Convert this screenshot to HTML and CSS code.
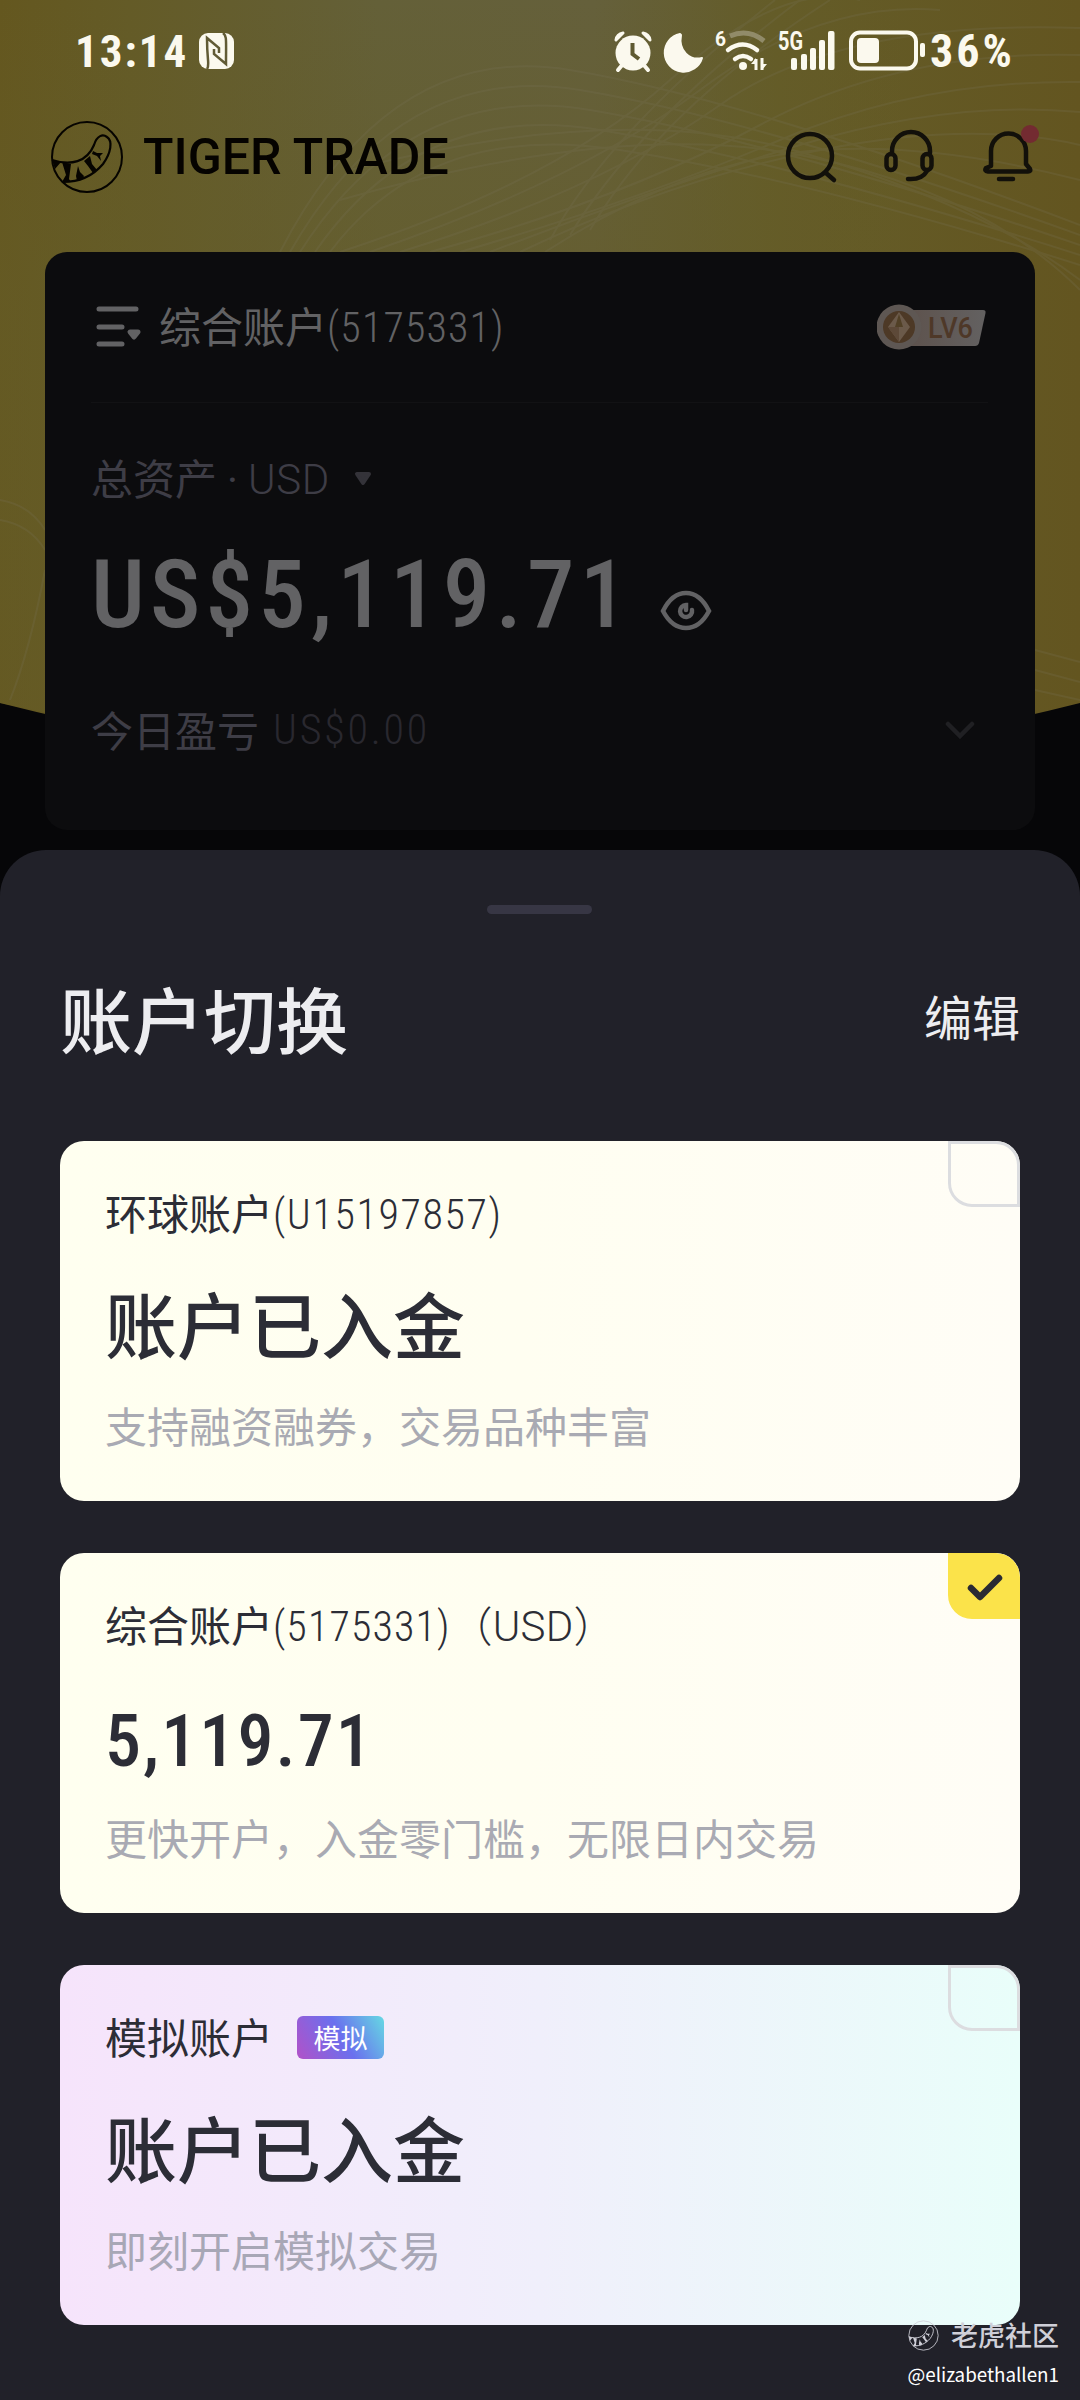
FILE: index.html
```html
<!DOCTYPE html>
<html lang="zh-CN">
<head>
<meta charset="utf-8">
<title>Tiger Trade</title>
<link rel="stylesheet" href="styles.css">
</head>
<body>
<svg class="defs" aria-hidden="true">
  <symbol id="tiger" viewBox="0 0 72 74">
    <circle cx="36" cy="37" r="35" fill="none" stroke="currentColor" stroke-width="2"/>
    <path d="M1 40C20 46 36 42 43 25C46 15 52 14 56 17C62 21 60 33 52 44C41 57 28 62 12 62" fill="none" stroke="currentColor" stroke-width="2.200"/>
    <path d="M1 40L10 42L4 49ZM11 42L20 44L18 59L20 62L11 62L15 55ZM27 46L29 52L33 56L31 60L26 61L25 56ZM33 41L39 36L41 44L46 50L42 53L37 46ZM42 31L46 33L52 33L49 36L50 41L46 36L41 34Z" fill="currentColor"/>
  </symbol>
</svg>
<main class="screen">
  <section class="home">
    <svg class="waves" viewBox="0 0 1080 720" preserveAspectRatio="none" aria-hidden="true">
      <defs>
        <linearGradient id="gold" x1="0" y1="0" x2="1" y2="0">
          <stop offset="0" stop-color="#64571f"/><stop offset=".12" stop-color="#645b27"/><stop offset=".35" stop-color="#646038"/><stop offset=".55" stop-color="#65603b"/><stop offset=".72" stop-color="#645c28"/><stop offset="1" stop-color="#635520"/>
        </linearGradient>
        <linearGradient id="goldLow" x1="0" y1="0" x2="0" y2="1">
          <stop offset="0" stop-color="#655c27" stop-opacity="0"/><stop offset=".4" stop-color="#655c27" stop-opacity=".9"/><stop offset="1" stop-color="#665e2a" stop-opacity="0.6"/>
        </linearGradient>
      </defs>
      <path d="M0 0H1080V703Q540 840 0 703Z" fill="url(#gold)"/>
      <path d="M0 0H900V720Q450 800 0 703Z" fill="url(#goldLow)" opacity=".6"/>
      <g fill="none" stroke="#787256" stroke-width="2" opacity=".24">
        <path d="M280 252Q390 40 570 70T1080 225"/><path d="M290 252Q400 60 580 90T1080 235"/><path d="M300 252Q410 80 590 110T1080 245"/><path d="M315 252Q420 100 600 130T1080 255"/><path d="M330 252Q430 120 620 150T1080 265"/>
        <path d="M340 252Q560 180 670 80T860 0"/><path d="M370 252Q580 180 700 90T940 10"/><path d="M400 252Q600 190 720 105T1080 28"/><path d="M430 252Q620 200 760 125T1080 55"/><path d="M460 252Q640 200 780 140T1080 82"/><path d="M490 252Q650 190 800 145T1080 112"/><path d="M520 252Q670 180 820 150T1080 145"/><path d="M545 252Q680 165 800 152T1080 180"/>
        <path d="M550 240Q610 130 775 0"/><path d="M570 235Q640 120 800 0"/><path d="M590 230Q660 110 830 0"/><path d="M350 170Q620 100 800 152T1080 280"/><path d="M340 200Q620 120 800 155T1080 290"/><path d="M0 500Q30 505 45 530"/><path d="M0 520Q30 525 45 550"/><path d="M10 700Q30 650 45 570"/><path d="M1035 650L1080 662"/><path d="M1035 670L1080 682"/><path d="M1035 690L1080 700"/>
      </g>
    </svg>

    <header class="status">
      <span class="clock">13:14</span>
      <svg class="nfc" viewBox="0 0 35 36"><rect width="35" height="36" rx="9" fill="#fbf9ee"/><path d="M8 36C11 32 8 29 8 5L20 15V20M24 0C28 3 27 6 27 31L15 21V16" fill="none" stroke="#615b35" stroke-width="2.5"/></svg>
      <svg class="icons" viewBox="0 0 324 42">
        <g fill="#fbf9ee" stroke="none">
          <circle cx="19" cy="23" r="17.5"/><path d="M2 10Q3 4 9 3ZM29 3Q35 4 36 10Z" stroke="#fbf9ee" stroke-width="3" stroke-linejoin="round"/><path d="M9 34L4 40M29 34L34 40" stroke="#fbf9ee" stroke-width="4" stroke-linecap="round"/><path d="M18.500 13V24L25 29" fill="none" stroke="#5f5a31" stroke-width="4"/>
          <path d="M66 4A19 19 0 1 0 88 28C76 31 64 21 67 5Z" stroke="#fbf9ee" stroke-width="2" stroke-linejoin="round"/>
          <path d="M116 6Q134 -2 150 11" fill="none" stroke="#918b69" stroke-width="5"/><path d="M114 20Q129 9 143 20M121 29Q129 23 137 29" fill="none" stroke="#fbf9ee" stroke-width="4.500" stroke-linecap="round"/><circle cx="129" cy="36" r="4"/><path d="M137 34L142 28V34ZM153 34L148 40V34Z"/><path d="M142 29V40M148 28V40" stroke="#fbf9ee" stroke-width="3"/>
          <rect x="177" y="28" width="6" height="12" rx="2"/><rect x="187" y="24" width="6" height="16" rx="2"/><rect x="196" y="18" width="6" height="22" rx="2"/><rect x="205" y="10" width="6" height="30" rx="2"/><rect x="214" y="1" width="6.500" height="39" rx="2"/>
          <rect x="237" y="2.500" width="65" height="36" rx="9" fill="none" stroke="#fbf9ee" stroke-width="4"/><rect x="243" y="8" width="22" height="25" rx="4"/><rect x="306" y="13" width="5" height="14" rx="2"/>
        </g>
        <text class="tag" x="101" y="16" textLength="11" lengthAdjust="spacingAndGlyphs">6</text>
        <text class="tag big" x="164" y="20" textLength="25" lengthAdjust="spacingAndGlyphs">5G</text>
      </svg>
      <span class="percent">36%</span>
    </header>

    <nav class="bar">
      <svg class="logo"><use href="#tiger"/></svg>
      <span class="brand">TIGER TRADE</span>
      <svg class="tools" viewBox="0 0 260 64" fill="none" stroke="#12100a" stroke-width="4.500" stroke-linecap="round" stroke-linejoin="round">
        <ellipse cx="27" cy="34" rx="22" ry="22"/><path d="M43 51L51 58"/>
        <path d="M109 31V29A19 19 0 0 1 147 29V31"/><rect x="103.500" y="32" width="9" height="16" rx="4.500"/><rect x="139.500" y="32" width="9" height="16" rx="4.500"/><path d="M144 49Q139 58 125 57"/>
        <path d="M208 44V29A17.500 17.500 0 0 1 243 29V42L247 47Q248 49.500 245 49.500H205Q201 49 203 46Z"/><path d="M216 57H230"/><circle cx="247" cy="12" r="9" fill="#732b31" stroke="none"/>
      </svg>
    </nav>

    <article class="summary">
      <div class="summary-head">
        <svg class="switch" viewBox="0 0 46 42"><path d="M3 3H40M3 21H26M3 38H26" stroke="#626264" stroke-width="5" stroke-linecap="round"/><path d="M34 26H42L38 31Z" fill="#626264" stroke="#626264" stroke-width="5" stroke-linejoin="round"/></svg>
        <div class="account"><span>综合账户</span><span class="din">(5175331)</span></div>
        <svg class="level" viewBox="0 0 110 46">
          <defs><linearGradient id="tagFill"><stop offset="0" stop-color="#5d514b"/><stop offset="1" stop-color="#636161"/></linearGradient></defs>
          <path d="M24 6H106Q109 6 108.500 9L102 39Q101 42 98 42H24Z" fill="url(#tagFill)"/><circle cx="22" cy="23" r="22.500" fill="#5e5753"/><circle cx="22" cy="23" r="16" fill="#4d3926"/><path d="M22 8L33 23L22 38L11 23Z" fill="#6b5a4a"/><path d="M22 10L26 23H18Z" fill="#514026"/><path d="M11 23H22V38Z" fill="#5d4938"/>
          <text x="51" y="34" textLength="45" lengthAdjust="spacingAndGlyphs">LV6</text>
        </svg>
      </div>
      <div class="assets"><span>总资产</span><span class="dot">·</span><span class="din usd">USD</span><svg class="caret" viewBox="0 0 18 16"><path d="M3 3H15L9 12Z" fill="#343339" stroke="#343339" stroke-width="4" stroke-linejoin="round"/></svg></div>
      <div class="total"><span class="amount">US$5,119.71</span><svg class="eye" viewBox="0 0 52 42" fill="none" stroke="#626264" stroke-width="4.500" stroke-linecap="round"><path d="M3 21Q12 3 26 3T49 21Q40 38 26 38T3 21Z"/><path d="M32 20A6 6 0 1 1 26 15V20"/></svg></div>
      <div class="today"><span>今日盈亏</span><span class="din profit">US$0.00</span><svg class="down" viewBox="0 0 30 18"><path d="M3 3L15 15L27 3" fill="none" stroke="#202023" stroke-width="4.500" stroke-linecap="round"/></svg></div>
    </article>
  </section>

  <section class="sheet">
    <div class="handle"></div>
    <div class="sheet-head"><h1>账户切换</h1><span class="edit">编辑</span></div>
    <div class="accounts">
      <article class="card">
        <div class="name"><span>环球账户</span><span class="din global">(U15197857)</span></div>
        <strong>账户已入金</strong>
        <p>支持融资融券，交易品种丰富</p>
        <span class="mark"></span>
      </article>
      <article class="card">
        <div class="name"><span>综合账户</span><span class="din">(5175331)</span><span class="wide">（</span><span class="din unit">USD</span><span class="wide">）</span></div>
        <strong class="figure">5,119.71</strong>
        <p>更快开户，入金零门槛，无限日内交易</p>
        <span class="mark on"><svg viewBox="0 0 36 28"><path d="M4 14L13 23L32 4" fill="none" stroke="#292a33" stroke-width="6.500" stroke-linecap="round" stroke-linejoin="round"/></svg></span>
      </article>
      <article class="card demo">
        <div class="name"><span>模拟账户</span><span class="chip">模拟</span></div>
        <strong>账户已入金</strong>
        <p>即刻开启模拟交易</p>
        <span class="mark"></span>
      </article>
    </div>
    <footer class="credit"><div class="community"><svg class="stamp"><use href="#tiger"/></svg><span>老虎社区</span></div><span class="user">@elizabethallen1</span></footer>
  </section>
</main>
</body>
</html>
```
FILE: styles.css
```css
* { box-sizing: border-box; }
body { margin: 0; background: #060608; font-family: "Noto Sans CJK SC", sans-serif; }
.defs { position: absolute; width: 0; height: 0; }
.screen { width: 1080px; height: 2400px; overflow: hidden; display: flex; flex-direction: column; }
.screen svg { display: block; flex: none; }

.home { position: relative; height: 850px; flex: none; }
.waves { position: absolute; left: 0; top: 0; width: 1080px; height: 720px; }
.status { position: relative; height: 102px; padding: 0 62px 0 75px; display: flex; align-items: center; color: #fbf9ee; font: 700 45px/1 Roboto, sans-serif; }
.clock { width: 124px; letter-spacing: 2px; font-stretch: 84%; white-space: nowrap; }
.nfc { width: 35px; height: 36px; }
.icons { width: 324px; height: 42px; margin-left: auto; overflow: visible; }
.tag { font: 700 21px Roboto, sans-serif; fill: #fbf9ee; }
.tag.big { font-size: 26px; }
.percent { width: 88px; margin-left: -8px; white-space: nowrap; font-size: 46px; font-stretch: 85%; letter-spacing: 3px; }
.bar { position: relative; height: 150px; padding: 18px 37px 22px 51px; display: flex; align-items: flex-start; }
.logo { width: 72px; height: 74px; color: #060400; }
.brand { margin: 10px 0 0 20px; color: #050300; font: 500 50px/54px Roboto, sans-serif; letter-spacing: 0; white-space: nowrap; }
.tools { width: 260px; height: 64px; margin: 2px 0 0 auto; }

.summary { position: relative; width: 990px; height: 578px; margin-left: 45px; padding: 0 47px 0 46px; border-radius: 22px; background: #0c0c0e; color: #626264; font-size: 42px; }
.summary-head { height: 151px; display: flex; align-items: center; border-bottom: 1px solid #121214; }
.switch { width: 46px; height: 42px; margin-left: 5px; }
.account { display: flex; margin-left: 17px; margin-top: -4px; line-height: 60px; }
.din { position: relative; top: 3px; font-family: Roboto, sans-serif; font-weight: 350; font-stretch: 85%; letter-spacing: 1.1px; }
.level { width: 110px; height: 46px; margin-left: auto; margin-right: 1px; margin-top: -1px; }
.level text { font: 500 30px Roboto, sans-serif; fill: #4e3828; }
.assets { height: 60px; margin-top: 44px; display: flex; align-items: center; line-height: 60px; color: #3e3d46; }
.dot { position: relative; top: 4px; width: 31px; text-align: center; font-family: Roboto, sans-serif; }
.usd { font-stretch: 100%; letter-spacing: .6px; }
.caret { width: 18px; height: 16px; margin: 3px 0 0 24px; }
.total { height: 100px; margin-top: 38px; display: flex; align-items: center; }
.amount { width: 569px; font: 500 95px/100px Roboto, sans-serif; font-stretch: 86%; letter-spacing: 5.2px; white-space: nowrap; }
.eye { width: 52px; height: 42px; margin-top: 31px; }
.today { height: 60px; margin-top: 54px; display: flex; align-items: center; line-height: 60px; color: #3e3d46; }
.profit { top: 1px; margin-left: 14px; color: #29282f; letter-spacing: 2.8px; }
.down { width: 30px; height: 18px; margin: 2px 13px 0 auto; }

.sheet { position: relative; height: 1550px; flex: none; background: #212129; border-radius: 46px 46px 0 0; padding: 55px 60px 0; }
.handle { width: 105px; height: 9px; margin: 0 0 0 427px; border-radius: 5px; background: #373644; }
.sheet-head { height: 227px; padding-top: 55px; display: flex; justify-content: space-between; color: #ededf0; }
h1 { margin: 0; font-size: 72px; line-height: 96px; font-weight: 500; }
.edit { font-size: 48px; line-height: 92px; }
.accounts { display: grid; gap: 52px; }
.card { position: relative; height: 360px; border-radius: 24px; padding: 41px 45px 0; overflow: hidden; background: linear-gradient(90deg, #fffff0 0%, #fffef1 48%, #fffdf6 100%); color: #2c2d36; }
.demo { background: linear-gradient(90deg, #f6e4fb, #f0effb 50%, #e9fefa); }
.name { height: 60px; display: flex; align-items: center; font-size: 42px; line-height: 60px; white-space: nowrap; }
.card strong { display: block; height: 96px; margin-top: 32px; font-size: 72px; line-height: 96px; font-weight: 500; }
.card .figure { padding-top: 8px; font-family: Roboto, sans-serif; font-stretch: 86%; letter-spacing: 2.1px; }
.card p { margin: 25px 0 0; font-size: 42px; line-height: 60px; color: #a9aab3; white-space: nowrap; }
.demo p { color: #a8a7b6; }
.global { letter-spacing: 1.6px; }
.unit { font-stretch: 100%; letter-spacing: .3px; }
.wide { font-weight: 300; }
.chip { width: 87px; height: 43px; margin: 2px 0 0 24px; border-radius: 6px; background: linear-gradient(60deg, #b251c8, #6a70ee 52%, #65d9e3); color: #fff; font-size: 27px; line-height: 43px; text-align: center; }
.mark { position: absolute; right: 0; top: 0; width: 72px; height: 66px; border: 3px solid #dcdde0; border-radius: 0 24px 0 24px; display: flex; align-items: center; justify-content: center; }
.on { background: #fbe34a; border-color: #fbe34a; }
.mark svg { width: 36px; height: 28px; margin: 3px 0 0 1px; }
.credit { position: absolute; right: 21px; bottom: 10px; width: 160px; display: flex; flex-direction: column; align-items: flex-end; color: #cfcfd8; }
.community { display: flex; align-items: center; gap: 12px; font-size: 27px; line-height: 38px; font-weight: 500; white-space: nowrap; }
.stamp { width: 31px; height: 31px; }
.user { margin-top: 4px; color: #fff; font-size: 18.800px; line-height: 32px; }
```
